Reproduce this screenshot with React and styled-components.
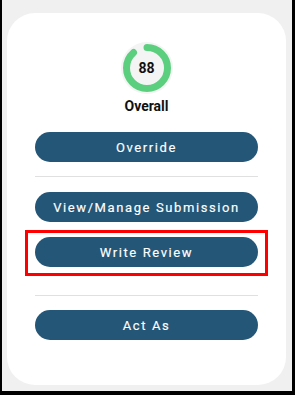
import React from "react";
import styled, { createGlobalStyle } from "styled-components";

const GlobalStyle = createGlobalStyle`
  html, body {
    margin: 0;
    padding: 0;
    background: #000;
  }
  body {
    font-family: Roboto, "Liberation Sans", Arial, sans-serif;
  }
`;

const Frame = styled.div`
  width: 290px;
  height: 391px;
  margin-left: 2px;
  background: #f0f0f0;
  padding: 13px 6px 6px 5px;
  box-sizing: border-box;
  display: flex;
`;

const Card = styled.div`
  flex: 1;
  background: #fff;
  border-radius: 28px;
  padding: 29px 28px 0;
  display: flex;
  flex-direction: column;
  align-items: center;
`;

const Gauge = styled.div`
  position: relative;
  width: 52px;
  height: 52px;
`;

const GaugeValue = styled.span`
  position: absolute;
  inset: 0;
  display: flex;
  align-items: center;
  justify-content: center;
  font-size: 14px;
  font-weight: 700;
  color: #111;
`;

const Label = styled.div`
  margin-top: 4px;
  font-size: 14px;
  font-weight: 700;
  color: #111;
  line-height: 17px;
`;

const Actions = styled.div`
  align-self: stretch;
  margin-top: 17px;
  display: flex;
  flex-direction: column;
`;

const Button = styled.button`
  width: 100%;
  height: 30px;
  border: none;
  border-radius: 15px;
  background: #245677;
  color: #fff;
  font-family: Roboto, "Liberation Sans", Arial, sans-serif;
  font-size: 13px;
  font-weight: 400;
  letter-spacing: 1.6px;
  -webkit-text-stroke: 0.15px #fff;
  cursor: pointer;
  padding: 0;
`;

const Divider = styled.hr`
  border: none;
  border-top: 1px solid #e0e0e0;
  margin: ${({ $top }) => $top}px 0 ${({ $bottom }) => $bottom}px;
`;

const Highlight = styled.div`
  margin: 8px -10px 0;
  padding: 4px 7px 6px;
  border: 3px solid #ff0000;
`;

const ScoreRing = ({ value }) => {
  const r = 20.5;
  const c = 2 * Math.PI * r;
  return (
    <Gauge>
      <svg width="52" height="52" viewBox="0 0 52 52">
        <circle cx="26" cy="26" r="26" fill="#f4f4f4" />
        <circle
          cx="26"
          cy="26"
          r={r}
          fill="none"
          stroke="#5ccf7f"
          strokeWidth="7"
          strokeLinecap="round"
          strokeDasharray={`${(value / 100) * c} ${c}`}
          transform="rotate(-90 26 26)"
        />
      </svg>
      <GaugeValue>{value}</GaugeValue>
    </Gauge>
  );
};

const App = () => (
  <>
    <GlobalStyle />
    <Frame>
      <Card>
        <ScoreRing value={88} />
        <Label>Overall</Label>
        <Actions>
          <Button>Override</Button>
          <Divider $top={14} $bottom={15} />
          <Button>View/Manage Submission</Button>
          <Highlight>
            <Button>Write Review</Button>
          </Highlight>
          <Divider $top={19} $bottom={14} />
          <Button>Act As</Button>
        </Actions>
      </Card>
    </Frame>
  </>
);

export default App;
